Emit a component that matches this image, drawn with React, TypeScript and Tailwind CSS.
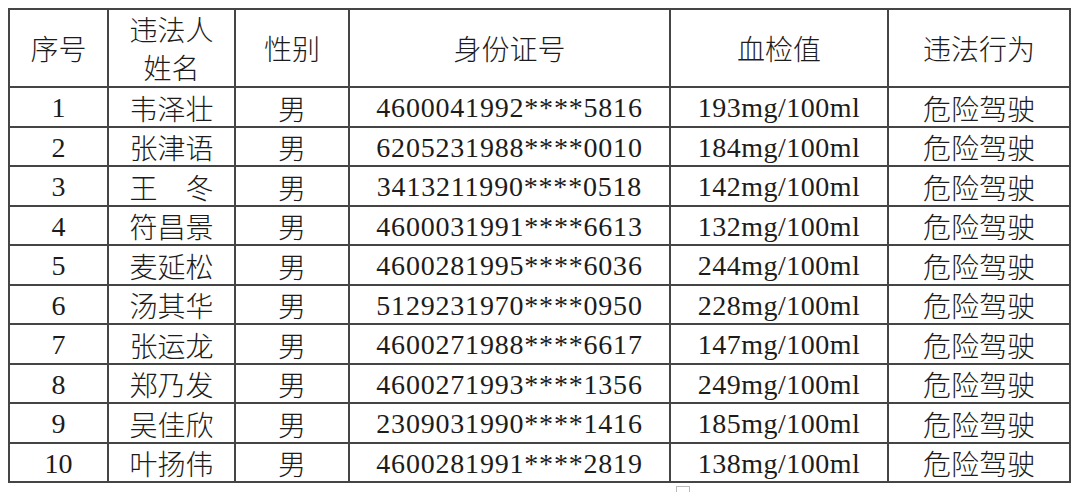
const rows = [
  ['1', '韦泽壮', '男', '4600041992****5816', '193mg/100ml', '危险驾驶'],
  ['2', '张津语', '男', '6205231988****0010', '184mg/100ml', '危险驾驶'],
  ['3', '王　冬', '男', '3413211990****0518', '142mg/100ml', '危险驾驶'],
  ['4', '符昌景', '男', '4600031991****6613', '132mg/100ml', '危险驾驶'],
  ['5', '麦延松', '男', '4600281995****6036', '244mg/100ml', '危险驾驶'],
  ['6', '汤其华', '男', '5129231970****0950', '228mg/100ml', '危险驾驶'],
  ['7', '张运龙', '男', '4600271988****6617', '147mg/100ml', '危险驾驶'],
  ['8', '郑乃发', '男', '4600271993****1356', '249mg/100ml', '危险驾驶'],
  ['9', '吴佳欣', '男', '2309031990****1416', '185mg/100ml', '危险驾驶'],
  ['10', '叶扬伟', '男', '4600281991****2819', '138mg/100ml', '危险驾驶'],
]

function Cell({ children, className = '' }: { children: React.ReactNode; className?: string }) {
  return (
    <div className={`flex items-center justify-center bg-white text-[28px] text-[#1c1c1c] ${className}`}>
      {children}
    </div>
  )
}

// digits and latin text
const num = "font-['Liberation_Serif'] leading-none pt-[3px]"
// chinese text
const cjk = "font-['Noto_Sans_CJK_SC'] font-light leading-none"

export default function App() {
  return (
    <div className="relative h-[492px] w-[1080px] overflow-hidden bg-white pl-[8px] pt-[8px]">
      <div className="grid w-[1063px] grid-cols-[97px_125px_112px_319px_216px_180px] grid-rows-[76px_repeat(10,37.5px)] gap-[2px] bg-[#454545] p-[2px]">
        <Cell className={cjk}>序号</Cell>
        <Cell className={`flex-col ${cjk}`}>
          <span className="leading-[38px]">违法人</span>
          <span className="leading-[38px]">姓名</span>
        </Cell>
        <Cell className={cjk}>性别</Cell>
        <Cell className={cjk}>身份证号</Cell>
        <Cell className={cjk}>血检值</Cell>
        <Cell className={cjk}>违法行为</Cell>
        {rows.map((r) => (
          <>
            <Cell key={r[0] + 'a'} className={num}>{r[0]}</Cell>
            <Cell key={r[0] + 'b'} className={`pt-[2px] ${cjk}`}>{r[1]}</Cell>
            <Cell key={r[0] + 'c'} className={`pt-[2px] ${cjk}`}>{r[2]}</Cell>
            <Cell key={r[0] + 'd'} className={`tracking-[0.8px] ${num}`}>{r[3]}</Cell>
            <Cell key={r[0] + 'e'} className={`tracking-[0.5px] ${num}`}>{r[4]}</Cell>
            <Cell key={r[0] + 'f'} className={`pt-[2px] ${cjk}`}>{r[5]}</Cell>
          </>
        ))}
      </div>
      <div className="absolute left-[676px] top-[486px] h-[8px] w-[14px] border border-[#bbb] bg-white" />
    </div>
  )
}
